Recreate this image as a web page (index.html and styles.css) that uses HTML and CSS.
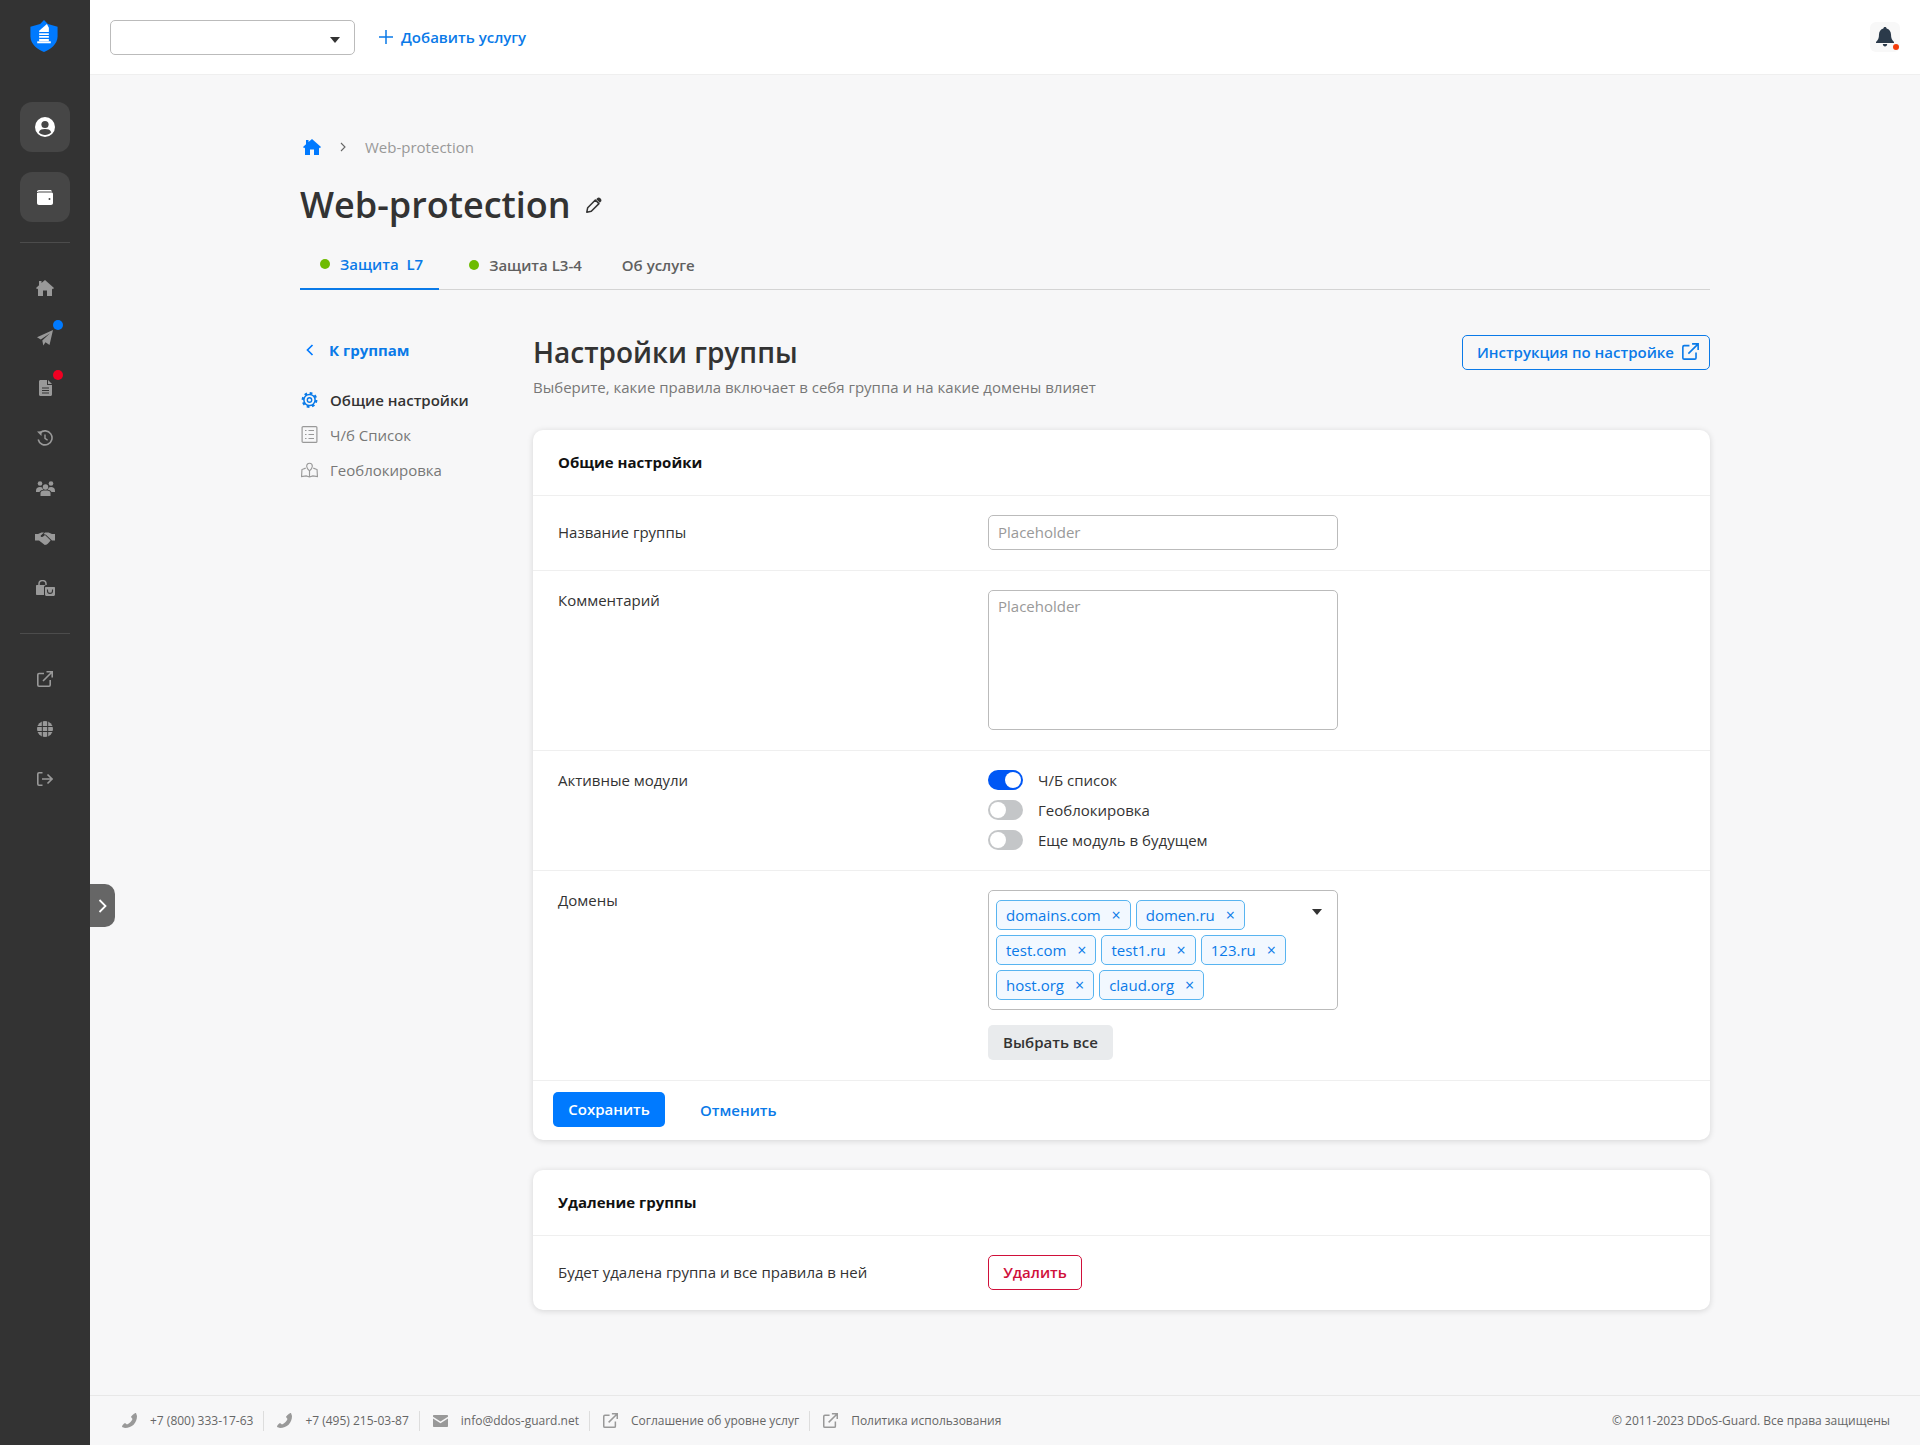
FILE: index.html
```html
<!DOCTYPE html>
<html lang="en">

<head>
    <meta charset="UTF-8">
    <meta name="viewport" content="width=device-width, initial-scale=1.0">
    <title>Web-protection</title>
    <link rel="stylesheet" href="styles.css">
</head>

<body>
    <div class="app">
        <aside class="sidebar">
            <div class="logo">
                <svg width="28" height="32" viewBox="0 0 28 33">
                    <path d="M14 0 L18 4 L28 7 V17 C28 25 20 31 14 33 C8 31 0 25 0 17 V7 L10 4 Z" fill="#007aff" />
                    <path d="M9 22 V11 L17 4 L19 8 V22 Z" fill="#fff" />
                    <path d="M9 13 H22 M9 16 H22 M9 19 H22" stroke="#007aff" stroke-width="1.2" />
                    <path d="M7 22 H21 V24 H7 Z" fill="#fff" />
                </svg>
            </div>
            <div class="side-box">
                <svg width="20" height="20" viewBox="0 0 20 20">
                    <circle cx="10" cy="10" r="10" fill="#fff" />
                    <circle cx="10" cy="7.5" r="3.6" fill="#464646" />
                    <path d="M3.8 15.2 C5 12.6 7 12 10 12 C13 12 15 12.6 16.2 15.2 C14.6 17 12.4 18 10 18 C7.6 18 5.4 17 3.8 15.2 Z" fill="#464646" />
                </svg>
            </div>
            <div class="side-box">
                <svg width="16" height="15" viewBox="0 0 16 15">
                    <path d="M2 0 H13 C14 0 15 .6 15 1.5 H2 C1.4 1.5 1 1.9 1 2 H0 C0 .8 .8 0 2 0 Z M1.5 2.6 H14.5 C15.4 2.6 16 3.2 16 4 V13 C16 14.2 15.2 15 14 15 H2 C.8 15 0 14.2 0 13 V3 C.4 2.8 1 2.6 1.5 2.6 Z" fill="#fff" />
                    <circle cx="12.5" cy="9" r="1" fill="#464646" />
                </svg>
            </div>
            <div class="side-line"></div>
            <nav class="side-nav">
                <a class="side-link">
                    <svg width="18" height="16" viewBox="0 0 18 16"><path d="M9 0 L18 8 L16.8 9.2 L16 8.5 V16 H11 V10.5 H7 V16 H2 V8.5 L1.2 9.2 L0 8 L3 5.3 V1 H5.5 V3.1 Z" /></svg>
                </a>
                <a class="side-link">
                    <svg width="16" height="16" viewBox="0 0 16 16"><path d="M16 0 L12.5 15 L8.5 12.2 L6.3 15.5 L5.3 10.5 L13 3.2 L3.8 9.4 L0 7.2 Z" /></svg>
                    <span class="badge badge-blue"></span>
                </a>
                <a class="side-link">
                    <svg width="13" height="16" viewBox="0 0 13 16"><path d="M1.5 0 H8 V4.5 C8 5 8.4 5 9 5 H13 V14.5 C13 15.4 12.4 16 11.5 16 H1.5 C.6 16 0 15.4 0 14.5 V1.5 C0 .6 .6 0 1.5 0 Z M9 0 L13 4 H9 Z" /><path d="M3 8 H10 M3 10.5 H10 M3 13 H10" stroke="#333" stroke-width="1.1" /></svg>
                    <span class="badge badge-red"></span>
                </a>
                <a class="side-link">
                    <svg width="16" height="16" viewBox="0 0 16 16"><path d="M3 3 A7 7 0 1 1 1.2 9.5" fill="none" stroke="#999" stroke-width="1.6" /><path d="M0 1.5 L4.8 1.2 L4.4 6 Z" /><path d="M8 4.5 V8.3 L10.6 10.2" fill="none" stroke="#999" stroke-width="1.4" /></svg>
                </a>
                <a class="side-link">
                    <svg width="19" height="15" viewBox="0 0 19 15"><circle cx="4" cy="2.5" r="2.3" /><circle cx="15" cy="2.5" r="2.3" /><circle cx="9.5" cy="6" r="2.7" /><path d="M4.5 15 V12 C4.5 10 6.5 9.5 9.5 9.5 C12.5 9.5 14.5 10 14.5 12 V15 Z M0 10 C0 7 1.5 6 4 6 C5 6 5.6 6.2 6.2 6.6 C6.4 7.6 6.8 8.2 7.4 8.8 C5.4 9.2 4 9.8 3.5 11 H0 Z M19 10 C19 7 17.5 6 15 6 C14 6 13.4 6.2 12.8 6.6 C12.6 7.6 12.2 8.2 11.6 8.8 C13.6 9.2 15 9.8 15.5 11 H19 Z" /></svg>
                </a>
                <a class="side-link">
                    <svg width="20" height="13" viewBox="0 0 20 13"><path d="M0 2 H3 L6.5 .5 H9 L5.8 3.6 C5.4 4.2 5.8 5 6.6 5 C7.4 5.2 8 4.6 8.8 3.9 L10 3 L15.6 8.6 L13 11.4 L11.8 12.6 L9.8 13 L4 8.5 H0 Z M10 .5 H13.5 L17 2 H20 V8.5 H17 L11 2.8 L8.6 2 Z" /></svg>
                </a>
                <a class="side-link">
                    <svg width="19" height="16" viewBox="0 0 19 16"><path d="M3 5 V4 C3 2 4.5 .6 6.5 .6 C8.5 .6 10 2 10 4 V5" fill="none" stroke="#999" stroke-width="1.5" /><path d="M1 5 H10 C8.4 5.4 8 6.4 8 7.5 V15 H1 C.4 15 0 14.6 0 14 V6 C0 5.4 .4 5 1 5 Z" /><path d="M10 7 H18 C18.6 7 19 7.4 19 8 V14.5 C19 15.4 18.4 16 17.5 16 H10.5 C9.6 16 9 15.4 9 14.5 V8 C9 7.4 9.4 7 10 7 Z" /><path d="M11.5 9.5 V11 C11.5 12.4 12.6 13.4 14 13.4 C15.4 13.4 16.5 12.4 16.5 11 V9.5" fill="none" stroke="#333" stroke-width="1.1" /></svg>
                </a>
            </nav>
            <div class="side-line"></div>
            <nav class="side-nav">
                <a class="side-link">
                    <svg width="16" height="16" viewBox="0 0 16 16" fill="none" stroke="#999" stroke-width="1.6"><path d="M7 2.5 H2 C1.4 2.5 .8 3 .8 3.7 V14 C.8 14.7 1.4 15.2 2 15.2 H12 C12.7 15.2 13.2 14.7 13.2 14 V9" /><path d="M6 10 L15 1 M9.5 .8 H15.2 V6.5" /></svg>
                </a>
                <a class="side-link">
                    <svg width="16" height="16" viewBox="0 0 16 16"><circle cx="8" cy="8" r="8" /><path d="M0 5.5 H16 M0 10.5 H16 M5.3 0 V16 M10.7 0 V16" stroke="#333" stroke-width="1" /></svg>
                </a>
                <a class="side-link">
                    <svg width="16" height="14" viewBox="0 0 16 14" fill="none" stroke="#999" stroke-width="1.6"><path d="M5.5 .8 H2 C1.3 .8 .8 1.3 .8 2 V12 C.8 12.7 1.3 13.2 2 13.2 H5.5" /><path d="M5 7 H15 M10.5 2.5 L15 7 L10.5 11.5" /></svg>
                </a>
            </nav>
        </aside>
        <a class="side-toggle">
            <svg width="9" height="14" viewBox="0 0 9 14" fill="none" stroke="#fff" stroke-width="1.8"><path d="M1.5 1 L7.5 7 L1.5 13" /></svg>
        </a>

        <div class="main">
            <header class="topbar">
                <div class="service-select"><span class="caret"></span></div>
                <a class="add-service">
                    <svg width="14" height="14" viewBox="0 0 14 14" stroke="#0a7ae8" stroke-width="1.5"><path d="M7 0 V14 M0 7 H14" /></svg>
                    Добавить услугу
                </a>
                <div class="bell">
                    <svg width="18" height="20" viewBox="0 0 18 20"><path d="M9 0 C10 0 10.6 .6 10.6 1.6 C13.4 2.4 15 4.6 15 7.6 C15 11.4 16 13 18 15 V16 H0 V15 C2 13 3 11.4 3 7.6 C3 4.6 4.6 2.4 7.4 1.6 C7.4 .6 8 0 9 0 Z" fill="#2b3a4a" /><path d="M6.8 17 H11.2 C11.2 18.4 10.2 19.4 9 19.4 C7.8 19.4 6.8 18.4 6.8 17 Z" fill="#2b3a4a" /></svg>
                    <span class="bell-dot"></span>
                </div>
            </header>

            <div class="content">
                <div class="breadcrumb">
                    <svg width="18" height="16" viewBox="0 0 18 16" fill="#007aff"><path d="M9 0 L18 8 L16.8 9.2 L16 8.5 V16 H11 V10.5 H7 V16 H2 V8.5 L1.2 9.2 L0 8 L3 5.3 V1 H5.5 V3.1 Z" /></svg>
                    <svg class="crumb-sep" width="6" height="10" viewBox="0 0 6 10" fill="none" stroke="#666" stroke-width="1.1"><path d="M1 1 L5 5 L1 9" /></svg>
                    <span>Web-protection</span>
                </div>
                <div class="page-title">
                    <h1>Web-protection</h1>
                    <svg width="18" height="18" viewBox="0 0 20 20"><path d="M2 18 L3 13 L11.5 4.5 L15.5 8.5 L7 17 Z" fill="none" stroke="#333" stroke-width="1.7" stroke-linejoin="round" /><path d="M12.5 3.5 L13.5 2.5 C14.5 1.5 16 1.5 17 2.5 L17.5 3 C18.5 4 18.5 5.5 17.5 6.5 L16.5 7.5 Z" fill="#333" /></svg>
                </div>
                <div class="tabs">
                    <a class="tab tab-active"><span class="dot"></span>Защита&nbsp; L7</a>
                    <a class="tab"><span class="dot"></span>Защита L3-4</a>
                    <a class="tab">Об услуге</a>
                </div>

                <div class="columns">
                    <div class="subnav">
                        <a class="back-link">
                            <svg width="8" height="12" viewBox="0 0 8 12" fill="none" stroke="#007aff" stroke-width="1.7"><path d="M6.5 1 L1.5 6 L6.5 11" /></svg>
                            К группам
                        </a>
                        <a class="sub-item sub-item-active">
                            <svg width="16" height="16" viewBox="0 0 16 16" fill="none" stroke="#0a7ae8"><circle cx="8" cy="8" r="5.6" stroke-width="1.5" /><circle cx="8" cy="8" r="6.8" stroke-width="2.2" stroke-dasharray="2.7 2.64" /><circle cx="8" cy="8" r="2.2" stroke-width="1.4" /></svg>
                            Общие настройки
                        </a>
                        <a class="sub-item">
                            <svg width="16" height="17" viewBox="0 0 16 17" fill="none" stroke="#999" stroke-width="1.2"><rect x=".6" y=".6" width="14.8" height="15.8" rx="1" /><path d="M3.5 4.5 H5 M7 4.5 H12.5 M3.5 8.5 H5 M7 8.5 H12.5 M3.5 12.5 H5 M7 12.5 H12.5" /></svg>
                            Ч/б Список
                        </a>
                        <a class="sub-item">
                            <svg width="18" height="16" viewBox="0 0 18 16" fill="none" stroke="#999" stroke-width="1.2"><path d="M9 9 C7 7 6 5.6 6 4 C6 2 7.4 .8 9 .8 C10.6 .8 12 2 12 4 C12 5.6 11 7 9 9 Z" /><path d="M5 6 L1 7.5 L.6 15 L5.5 14.2 L9 15.4 L12.5 14.2 L17.4 15 L17 7.5 L13 6 M9 9 V15.4" /></svg>
                            Геоблокировка
                        </a>
                    </div>

                    <div class="settings">
                        <div class="settings-head">
                            <div>
                                <h2>Настройки группы</h2>
                                <p>Выберите, какие правила включает в себя группа и на какие домены влияет</p>
                            </div>
                            <a class="guide-btn">
                                Инструкция по настройке
                                <svg width="17" height="17" viewBox="0 0 16 16" fill="none" stroke="#0a7ae8" stroke-width="1.5"><path d="M7 2.5 H2 C1.4 2.5 .8 3 .8 3.7 V14 C.8 14.7 1.4 15.2 2 15.2 H12 C12.7 15.2 13.2 14.7 13.2 14 V9" /><path d="M6 10 L15 1 M9.5 .8 H15.2 V6.5" /></svg>
                            </a>
                        </div>

                        <section class="card">
                            <div class="card-title">Общие настройки</div>
                            <div class="row row-name">
                                <div class="row-label">Название группы</div>
                                <input class="field" type="text" placeholder="Placeholder">
                            </div>
                            <div class="row">
                                <div class="row-label row-label-top">Комментарий</div>
                                <textarea class="field field-area" placeholder="Placeholder"></textarea>
                            </div>
                            <div class="row">
                                <div class="row-label row-label-top">Активные модули</div>
                                <div class="modules">
                                    <div class="module"><span class="switch switch-on"></span>Ч/Б список</div>
                                    <div class="module"><span class="switch"></span>Геоблокировка</div>
                                    <div class="module"><span class="switch"></span>Еще модуль в будущем</div>
                                </div>
                            </div>
                            <div class="row">
                                <div class="row-label row-label-top">Домены</div>
                                <div>
                                    <div class="tag-box">
                                        <div class="tag-row">
                                            <span class="tag">domains.com<i>×</i></span>
                                            <span class="tag">domen.ru<i>×</i></span>
                                        </div>
                                        <div class="tag-row">
                                            <span class="tag">test.com<i>×</i></span>
                                            <span class="tag">test1.ru<i>×</i></span>
                                            <span class="tag">123.ru<i>×</i></span>
                                        </div>
                                        <div class="tag-row">
                                            <span class="tag">host.org<i>×</i></span>
                                            <span class="tag">claud.org<i>×</i></span>
                                        </div>
                                        <span class="caret caret-tags"></span>
                                    </div>
                                    <button class="btn-gray">Выбрать все</button>
                                </div>
                            </div>
                            <div class="card-actions">
                                <button class="btn-save">Сохранить</button>
                                <a class="btn-cancel">Отменить</a>
                            </div>
                        </section>

                        <section class="card">
                            <div class="card-title">Удаление группы</div>
                            <div class="row row-delete">
                                <div class="row-label">Будет удалена группа и все правила в ней</div>
                                <button class="btn-delete">Удалить</button>
                            </div>
                        </section>
                    </div>
                </div>
            </div>

            <footer class="footer">
                <div class="footer-links">
                    <a class="footer-item">
                        <svg width="15" height="15" viewBox="0 0 15 15"><path d="M14 0 L15 3 C15 10 10 15 3 15 L0 14 C0 12.5 1.5 10.8 3 10 L5 11.5 C7.5 10.5 9.5 8.5 10.5 6 L9 4 C9.8 2.4 12.5 0 14 0 Z" /></svg>
                        +7 (800) 333-17-63
                    </a>
                    <a class="footer-item">
                        <svg width="15" height="15" viewBox="0 0 15 15"><path d="M14 0 L15 3 C15 10 10 15 3 15 L0 14 C0 12.5 1.5 10.8 3 10 L5 11.5 C7.5 10.5 9.5 8.5 10.5 6 L9 4 C9.8 2.4 12.5 0 14 0 Z" /></svg>
                        +7 (495) 215-03-87
                    </a>
                    <a class="footer-item">
                        <svg width="15" height="12" viewBox="0 0 15 12"><path d="M1 0 H14 C14.6 0 15 .4 15 1 V1.8 L7.5 6.6 L0 1.8 V1 C0 .4 .4 0 1 0 Z M0 3.4 L7.5 8.2 L15 3.4 V11 C15 11.6 14.6 12 14 12 H1 C.4 12 0 11.6 0 11 Z" /></svg>
                        info@ddos-guard.net
                    </a>
                    <a class="footer-item">
                        <svg width="15" height="15" viewBox="0 0 16 16" fill="none" stroke="#999" stroke-width="1.6"><path d="M7 2.5 H2 C1.4 2.5 .8 3 .8 3.7 V14 C.8 14.7 1.4 15.2 2 15.2 H12 C12.7 15.2 13.2 14.7 13.2 14 V9" /><path d="M6 10 L15 1 M9.5 .8 H15.2 V6.5" /></svg>
                        Соглашение об уровне услуг
                    </a>
                    <a class="footer-item">
                        <svg width="15" height="15" viewBox="0 0 16 16" fill="none" stroke="#999" stroke-width="1.6"><path d="M7 2.5 H2 C1.4 2.5 .8 3 .8 3.7 V14 C.8 14.7 1.4 15.2 2 15.2 H12 C12.7 15.2 13.2 14.7 13.2 14 V9" /><path d="M6 10 L15 1 M9.5 .8 H15.2 V6.5" /></svg>
                        Политика использования
                    </a>
                </div>
                <div class="copyright">© 2011-2023 DDoS-Guard. Все права защищены</div>
            </footer>
        </div>
    </div>
</body>

</html>
```
FILE: styles.css
```css
* {
    box-sizing: border-box;
}

body {
    font-family: "Open Sans", "Noto Sans", sans-serif;
    font-size: 15px;
    color: #333;
    background-color: #f7f7f8;
    margin: 0;
}

h1,
h2,
p {
    margin: 0;
    font-weight: 600;
}

.app {
    display: flex;
    min-height: 100vh;
    position: relative;
}

/* left dark bar */
.sidebar {
    width: 90px;
    flex: none;
    background-color: #333;
    display: flex;
    flex-direction: column;
    align-items: center;
}

.logo {
    height: 102px;
    padding: 20px 2px 0 0;
}

.side-box {
    width: 50px;
    height: 50px;
    margin-bottom: 20px;
    border-radius: 12px;
    background-color: #464646;
    display: flex;
    align-items: center;
    justify-content: center;
}

.side-line {
    width: 50px;
    height: 1px;
    background-color: #4c4c4c;
}

.side-nav {
    padding: 20px 0;
}

.side-link {
    position: relative;
    display: flex;
    align-items: center;
    justify-content: center;
    width: 50px;
    height: 50px;
    fill: #999;
}

.badge {
    position: absolute;
    top: 7px;
    right: 7px;
    width: 10px;
    height: 10px;
    border-radius: 50%;
}

.badge-blue {
    background-color: #007aff;
}

.badge-red {
    background-color: #ef0022;
}

.side-toggle {
    position: absolute;
    left: 90px;
    top: 884px;
    width: 25px;
    height: 43px;
    border-radius: 0 10px 10px 0;
    background-color: #666;
    display: flex;
    align-items: center;
    justify-content: center;
}

.main {
    flex: 1;
    display: flex;
    flex-direction: column;
    min-width: 0;
}

/* top bar */
.topbar {
    height: 75px;
    flex: none;
    background-color: #fff;
    border-bottom: 1px solid #efefef;
    display: flex;
    align-items: center;
    padding: 1px 0 0 20px;
}

.service-select {
    position: relative;
    width: 245px;
    height: 35px;
    border: 1px solid #bbb;
    border-radius: 5px;
    background-color: #fff;
}

.caret {
    position: absolute;
    width: 0;
    height: 0;
    border-left: 5px solid transparent;
    border-right: 5px solid transparent;
    border-top: 6px solid #333;
    right: 14px;
    top: 16px;
}

.add-service {
    display: flex;
    align-items: center;
    gap: 8px;
    margin: -2px 0 0 24px;
    color: #0a7ae8;
    font-weight: 600;
}

.bell {
    position: relative;
    margin: -2px 20px 0 auto;
    width: 30px;
    height: 30px;
    display: flex;
    align-items: center;
    justify-content: center;
    border-radius: 6px;
    background-color: #f8f8f8;
}

.bell-dot {
    position: absolute;
    right: 1px;
    bottom: 2px;
    width: 6px;
    height: 6px;
    border-radius: 50%;
    background-color: #f43c0a;
}

/* page */
.content {
    flex: 1;
    padding: 61px 210px 0;
}

.breadcrumb {
    display: flex;
    align-items: center;
    height: 22px;
    padding-left: 3px;
    color: #999;
}

.crumb-sep {
    margin: 0 19px;
}

.page-title {
    display: flex;
    align-items: center;
    gap: 14px;
    margin-top: 21px;
}

h1 {
    font-size: 36px;
    line-height: 52px;
    color: #333;
}

.tabs {
    display: flex;
    margin-top: 18px;
    border-bottom: 1px solid #d4d4d4;
    height: 41px;
}

.tab {
    display: flex;
    align-items: center;
    height: 41px;
    padding: 0 16px 9px 20px;
    font-weight: 600;
    color: #606060;
}

.tab-active {
    color: #0a7ae8;
    border-bottom: 2px solid #0a7ae8;
}

.tab:nth-child(2) {
    padding-left: 30px;
}

.tab:nth-child(3) {
    padding-left: 24px;
}

.dot {
    width: 10px;
    height: 10px;
    margin-right: 10px;
    border-radius: 50%;
    background-color: #6ebb00;
}

.columns {
    display: flex;
    margin-top: 45px;
}

.subnav {
    width: 233px;
    flex: none;
}

.back-link {
    display: flex;
    align-items: center;
    gap: 15px;
    height: 30px;
    padding-left: 6px;
    margin-bottom: 17px;
    color: #0a7ae8;
    font-weight: 700;
}

.sub-item {
    display: flex;
    align-items: center;
    gap: 12px;
    height: 35px;
    padding-left: 1px;
    color: #777;
}

.sub-item svg {
    width: 17px;
}

.sub-item-active {
    color: #333;
    font-weight: 600;
}

.settings {
    flex: 1;
    min-width: 0;
}

.settings-head {
    display: flex;
    justify-content: space-between;
    align-items: flex-start;
    height: 95px;
}

h2 {
    font-size: 28px;
    line-height: 35px;
}

.settings-head p {
    margin-top: 7px;
    font-weight: 400;
    color: #777;
}

.guide-btn {
    display: flex;
    align-items: center;
    gap: 8px;
    height: 35px;
    padding: 0 10px 2px 14px;
    border: 1px solid #0a7ae8;
    border-radius: 5px;
    color: #0a7ae8;
    font-weight: 600;
}

.card {
    background-color: #fff;
    border-radius: 10px;
    box-shadow: 0 1px 6px rgba(0, 0, 0, 0.14);
    margin-bottom: 30px;
}

.card-title {
    height: 65px;
    display: flex;
    align-items: center;
    padding: 0 25px 1px;
    font-weight: 700;
    color: #111;
}

.row {
    display: flex;
    padding: 19px 25px 20px;
    border-top: 1px solid #efefef;
}

.row-label {
    width: 430px;
    flex: none;
    line-height: 35px;
}

.row-label-top {
    line-height: 20px;
}

.field {
    display: block;
    width: 350px;
    height: 35px;
    padding: 0 9px 2px;
    border: 1px solid #bbb;
    border-radius: 5px;
    font-family: inherit;
    font-size: 15px;
    background-color: #fff;
}

.field::placeholder {
    color: #999;
}

.field-area {
    height: 140px;
    padding-top: 5px;
    resize: none;
}

.modules {
    display: flex;
    flex-direction: column;
    gap: 10px;
}

.module {
    display: flex;
    align-items: center;
    gap: 15px;
    height: 20px;
}

.switch {
    position: relative;
    width: 35px;
    height: 20px;
    border-radius: 10px;
    background-color: #c4c6c8;
}

.switch::after {
    content: "";
    position: absolute;
    left: 2px;
    top: 2px;
    width: 16px;
    height: 16px;
    border-radius: 50%;
    background-color: #fff;
}

.switch-on {
    background-color: #0057f5;
}

.switch-on::after {
    left: 17px;
}

.tag-box {
    position: relative;
    width: 350px;
    height: 120px;
    padding: 9px 7px;
    border: 1px solid #bbb;
    border-radius: 5px;
}

.tag-row {
    display: flex;
    gap: 5px;
    margin-bottom: 5px;
}

.tag {
    display: flex;
    align-items: center;
    height: 30px;
    padding: 0 9px;
    border: 1px solid #58b4f0;
    border-radius: 5px;
    background-color: #f2f8ff;
    color: #0a7ae8;
}

.tag i {
    margin-left: 11px;
    font-style: normal;
    font-size: 16px;
}

.caret-tags {
    top: 18px;
    right: 15px;
}

.btn-gray {
    display: block;
    width: 125px;
    height: 35px;
    margin-top: 15px;
    padding-bottom: 3px;
    border: none;
    border-radius: 5px;
    background-color: #e9ebed;
    color: #333;
    font-family: inherit;
    font-size: 15px;
    font-weight: 600;
}

.card-actions {
    display: flex;
    align-items: center;
    height: 60px;
    padding: 0 20px 2px;
    border-top: 1px solid #efefef;
}

.btn-save {
    width: 112px;
    height: 35px;
    padding-bottom: 3px;
    border: none;
    border-radius: 5px;
    background-color: #007aff;
    color: #fff;
    font-family: inherit;
    font-size: 15px;
    font-weight: 600;
}

.btn-cancel {
    margin-left: 35px;
    color: #0a7ae8;
    font-weight: 600;
}

.row-delete {
    height: 75px;
}

.btn-delete {
    width: 94px;
    height: 35px;
    padding-bottom: 3px;
    border: 1px solid #d0103a;
    border-radius: 5px;
    background-color: #fff;
    color: #d0103a;
    font-family: inherit;
    font-size: 15px;
    font-weight: 600;
}

/* footer */
.footer {
    height: 50px;
    flex: none;
    display: flex;
    align-items: center;
    justify-content: space-between;
    padding: 0 30px 0 32px;
    border-top: 1px solid #e8e8e8;
    font-size: 12px;
    color: #666;
}

.footer-links {
    display: flex;
    align-items: center;
}

.footer-item {
    display: flex;
    align-items: center;
    gap: 13px;
    height: 20px;
    padding-right: 10px;
    margin-right: 13px;
    border-right: 1px solid #ddd;
    fill: #999;
}

.footer-item:last-child {
    border-right: none;
}
```
